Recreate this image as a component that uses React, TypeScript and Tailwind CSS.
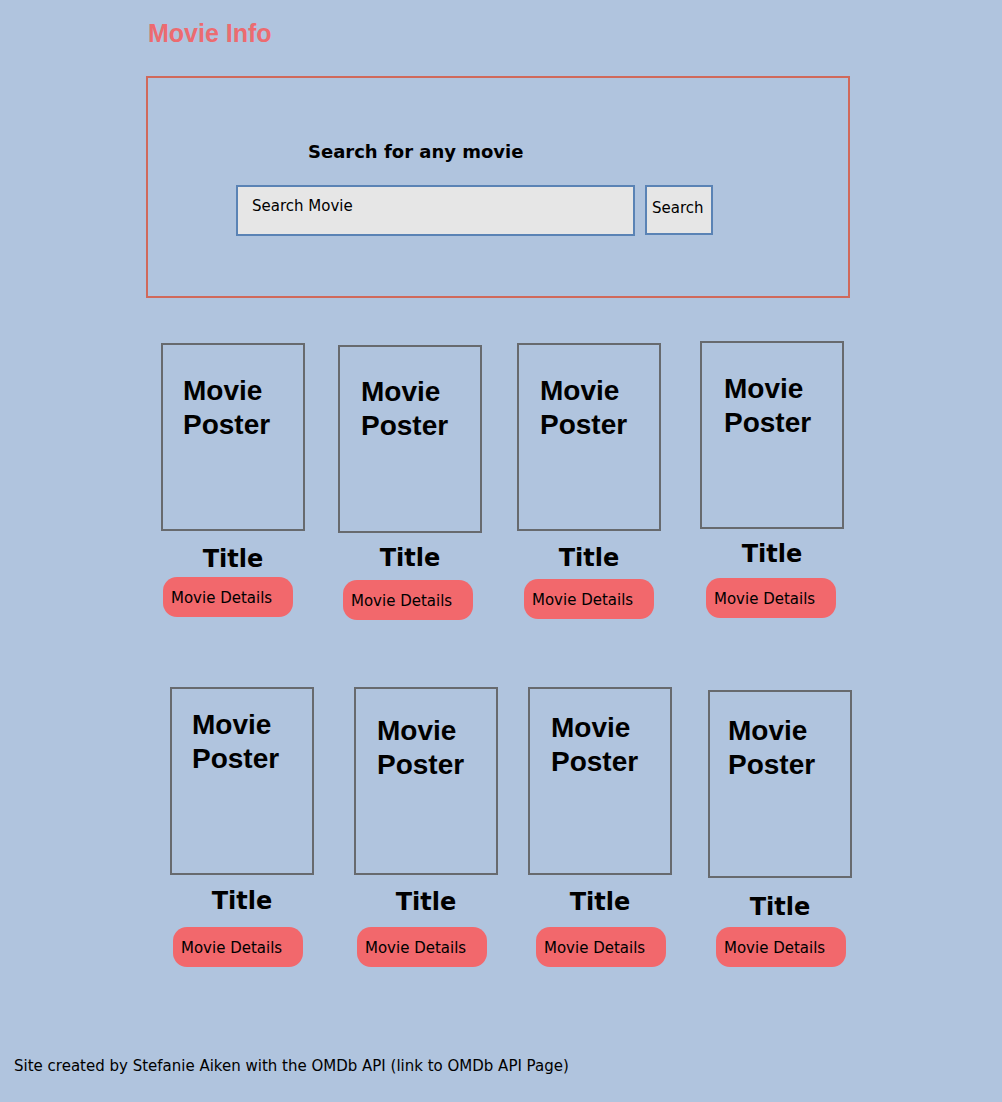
type Card = {
  ml: string;
  mt: string;
  pad: string;
  tmt: string;
  btn: string;
};

const rows: Card[][] = [
  [
    { ml: "ml-[161px]", mt: "mt-[2px]", pad: "pt-[29px] pl-[20px]", tmt: "mt-[16px]", btn: "mt-[6px] ml-[2px]" },
    { ml: "ml-[33px]", mt: "mt-[4px]", pad: "pt-[28px] pl-[21px]", tmt: "mt-[13px]", btn: "mt-[10px] ml-[5px]" },
    { ml: "ml-[35px]", mt: "mt-[2px]", pad: "pt-[29px] pl-[21px]", tmt: "mt-[15px]", btn: "mt-[9px] ml-[7px]" },
    { ml: "ml-[39px]", mt: "mt-0", pad: "pt-[29px] pl-[22px]", tmt: "mt-[13px]", btn: "mt-[12px] ml-[6px]" },
  ],
  [
    { ml: "ml-[170px]", mt: "mt-0", pad: "pt-[19px] pl-[20px]", tmt: "mt-[14px]", btn: "mt-[14px] ml-[3px]" },
    { ml: "ml-[40px]", mt: "mt-0", pad: "pt-[25px] pl-[21px]", tmt: "mt-[15px]", btn: "mt-[13px] ml-[3px]" },
    { ml: "ml-[30px]", mt: "mt-0", pad: "pt-[22px] pl-[21px]", tmt: "mt-[15px]", btn: "mt-[13px] ml-[8px]" },
    { ml: "ml-[36px]", mt: "mt-[3px]", pad: "pt-[22px] pl-[18px]", tmt: "mt-[17px]", btn: "mt-[8px] ml-[8px]" },
  ],
];

function MovieCard({ card }: { card: Card }) {
  return (
    <div className={`flex w-[144px] flex-col ${card.ml} ${card.mt}`}>
      <div
        className={`h-[188px] w-[144px] border-2 border-[#676A6E] font-['Liberation_Sans',Arial,sans-serif] text-[28px] font-bold leading-[34px] ${card.pad}`}
      >
        Movie
        <br />
        Poster
      </div>
      <div className={`self-center text-[24px] font-bold leading-none ${card.tmt}`}>Title</div>
      <button
        className={`flex h-[40px] w-[130px] items-start rounded-[14px] bg-[#F2686C] pl-[8px] pt-[14px] text-[15px] leading-none text-black ${card.btn}`}
      >
        Movie Details
      </button>
    </div>
  );
}

export default function App() {
  return (
    <div className="min-h-[1102px] bg-[#B0C4DE] pb-[20px] font-['DejaVu_Sans',Verdana,sans-serif] text-black">
      <h1 className="pl-[148px] pt-[21px] font-['Liberation_Sans',Arial,sans-serif] text-[25px] font-bold leading-none text-[#EC6B70]">
        Movie Info
      </h1>

      <section className="ml-[146px] mt-[30px] h-[222px] w-[704px] border-2 border-[#D0695B]">
        <h2 className="pl-[160px] pt-[65px] text-[18px] font-bold leading-none">Search for any movie</h2>
        <div className="ml-[88px] mt-[24px] flex items-start">
          <div className="h-[51px] w-[399px] border-2 border-[#5A83B5] bg-[#E6E6E6] pl-[14px] pt-[12px] text-[15px] leading-none">
            Search Movie
          </div>
          <button className="ml-[10px] flex h-[50px] w-[68px] items-start border-2 border-[#5A83B5] bg-[#E6E6E6] pl-[5px] pt-[14px] text-[15px] leading-none">
            Search
          </button>
        </div>
      </section>

      <div className="mt-[43px] flex items-start">
        {rows[0].map((card, i) => (
          <MovieCard key={i} card={card} />
        ))}
      </div>

      <div className="mt-[67px] flex items-start">
        {rows[1].map((card, i) => (
          <MovieCard key={i} card={card} />
        ))}
      </div>

      <footer className="mt-[92px] pl-[14px] text-[15px] leading-none">
        Site created by Stefanie Aiken with the OMDb API (link to OMDb API Page)
      </footer>
    </div>
  );
}
